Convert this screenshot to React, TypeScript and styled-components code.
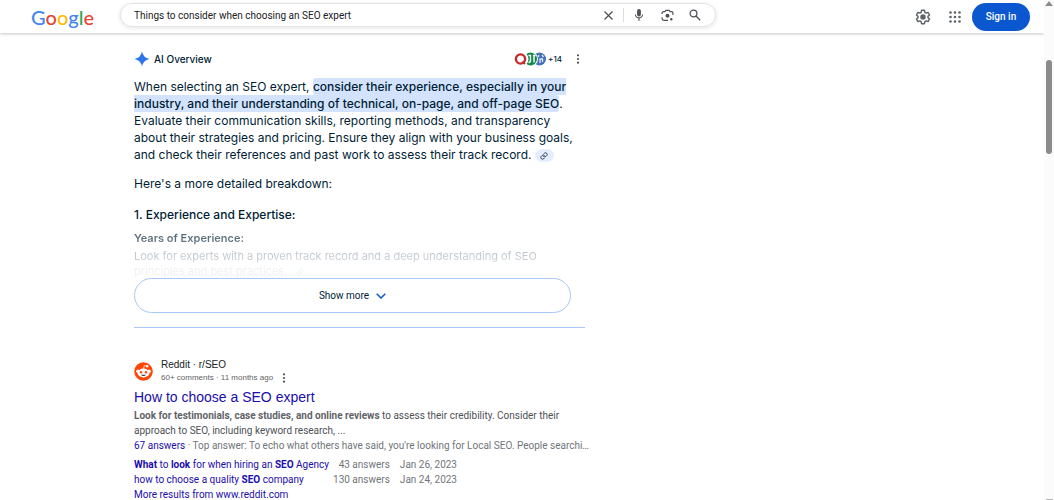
import React from "react";
import styled, { createGlobalStyle } from "styled-components";

const arial = `"Liberation Sans", Arial, sans-serif`;
const product = `Inter, "Google Sans", sans-serif`;

const GlobalStyle = createGlobalStyle`
  *, *::before, *::after { box-sizing: border-box; }
  html, body { margin: 0; background: #fff; overflow: hidden; }
  body { font-family: ${arial}; color: #001d35; }
  button, input { font: inherit; }
  h1, h2, h3, h4, p { margin: 0; }
`;

const Shell = styled.div`
  display: flex;
  height: 100vh;
  overflow: hidden;
`;

const Page = styled.div`
  flex: 1;
  min-width: 0;
`;

const Scrollbar = styled.div`
  width: 10px;
  background: #fbfbfb;
  display: flex;
  flex-direction: column;
  align-items: center;
  padding-top: 1px;
`;

const ScrollTrack = styled.div`
  flex: 1;
  width: 6px;
  padding-top: 54px;
`;

const ScrollThumb = styled.div`
  height: 94px;
  border-radius: 3px;
  background: #8b8b8b;
`;

const ScrollEnd = styled.div`
  width: 7px;
  height: 1px;
  background: #b5b5b5;
`;

const Header = styled.header`
  display: flex;
  align-items: center;
  height: 33px;
  padding: 0 14px 0 31px;
  box-shadow: 0 1px 3px rgba(60, 64, 67, 0.3);
`;

const Logo = styled.a`
  flex: none;
  width: 89px;
  font-family: Lato, sans-serif;
  font-size: 20px;
  font-weight: 500;
  line-height: 28px;
  text-decoration: none;
`;

const LogoLetter = styled.span<{ $color: string }>`
  color: ${(p) => p.$color};
`;

const SearchForm = styled.form`
  display: flex;
  align-items: center;
  flex: 0 1 596px;
  min-width: 0;
  height: 24px;
  margin-bottom: 3px;
  padding: 0 12px 0 13px;
  border: 1px solid #e3e5e8;
  border-radius: 12px;
  background: #fff;
  box-shadow: 0 1px 4px rgba(60, 64, 67, 0.14);
`;

const SearchInput = styled.input`
  flex: 1;
  min-width: 0;
  padding: 0;
  border: 0;
  outline: 0;
  background: transparent;
  font-family: Roboto, sans-serif;
  font-size: 10px;
  color: #202124;
`;

const IconButton = styled.button<{ $size?: number }>`
  display: flex;
  align-items: center;
  justify-content: center;
  flex: none;
  width: ${(p) => p.$size ?? 16}px;
  height: ${(p) => p.$size ?? 16}px;
  padding: 0;
  border: 0;
  background: none;
  color: #4d5156;
`;

const SearchTools = styled.div`
  display: flex;
  align-items: center;
  gap: 12px;
  height: 14px;
  margin-left: 7px;
  padding-left: 7px;
  border-left: 1px solid #dadce0;
`;

const HeaderActions = styled.div`
  display: flex;
  align-items: center;
  gap: 16px;
  margin-left: auto;
`;

const SignIn = styled.button`
  width: 58px;
  height: 28px;
  margin-left: -7px;
  padding: 0;
  border: 0;
  border-radius: 14px;
  background: #0b57d0;
  color: #fff;
  font-family: Roboto, sans-serif;
  font-size: 10px;
  font-weight: 500;
`;

const Main = styled.main`
  max-width: 585px;
  padding: 18px 0 0 134px;
`;

const OverviewHeader = styled.div`
  display: flex;
  align-items: center;
  height: 16px;
  gap: 4px;
`;

const OverviewTitle = styled.h2`
  font-family: ${product};
  font-size: 10px;
  font-weight: 500;
`;

const Sources = styled.button`
  display: flex;
  align-items: center;
  gap: 1px;
  margin: 0 5px 0 auto;
  padding: 0;
  border: 0;
  background: none;
  font-family: ${product};
  font-size: 8px;
  font-weight: 500;
  color: #001d35;
`;

const Summary = styled.section`
  font-family: ${product};
  font-size: 12px;
  line-height: 17px;
  white-space: nowrap;
`;

const Paragraph = styled.p`
  margin-top: 12px;
  &:first-child { margin-top: 11px; }
`;

const Highlight = styled.mark`
  padding: 1px 0;
  border-radius: 3px;
  background: #d3e3fd;
  color: inherit;
  font-weight: 500;
`;

const CiteChip = styled.button`
  display: inline-flex;
  align-items: center;
  justify-content: center;
  width: 19px;
  height: 13px;
  padding: 0;
  border: 0;
  border-radius: 7px;
  background: #e5edff;
  color: #001d35;
  vertical-align: middle;
`;

const Topic = styled.h3`
  margin-top: 14px;
  font-size: 12px;
  font-weight: 500;
`;

const Faded = styled.div`
  margin-top: 8px;
  font-size: 11px;
  line-height: 15px;
  mask-image: linear-gradient(#000a, #0009 14px, #0004 20px, #0003 32px, #0001 36px, #0001 46px);
`;

const FadedTitle = styled.h4`
  margin-bottom: 3px;
  font-size: 11px;
  font-weight: 600;
`;

const ShowMore = styled.button`
  display: flex;
  align-items: center;
  justify-content: center;
  gap: 7px;
  width: calc(100% - 14px);
  height: 35px;
  margin-top: -1px;
  padding: 0;
  border: 1px solid #a8c7fa;
  border-radius: 18px;
  background: #fff;
  font-family: Roboto, sans-serif;
  font-size: 10px;
  color: #001d35;
`;

const Divider = styled.hr`
  height: 1px;
  margin: 14px 0 30px;
  border: 0;
  background: #a8c7fa;
`;

const Result = styled.article`
  font-family: Roboto, Arial, sans-serif;
  font-size: 10px;
  line-height: 15px;
  color: #4d5156;
  white-space: nowrap;
`;

const Site = styled.div`
  display: flex;
  align-items: center;
  gap: 8px;
`;

const SiteName = styled.div`
  font-family: ${arial};
  font-size: 10px;
  line-height: 13px;
  color: #202124;
`;

const SiteMeta = styled.div`
  display: flex;
  align-items: center;
  gap: 6px;
  font-family: ${arial};
  font-size: 8px;
  line-height: 14px;
  color: #5f6368;
`;

const ResultTitle = styled.h3`
  margin: 3px 0 2px;
  font-family: ${arial};
  font-size: 14px;
  line-height: 18px;
  font-weight: 400;
`;

const Link = styled.a`
  color: #1a0dab;
  text-decoration: none;
`;

const Strong = styled.strong`
  color: #5f6368;
`;

const TopAnswer = styled.p`
  color: #70757a;
`;

const Answers = styled.table`
  margin-top: 4px;
  border-collapse: collapse;
  color: #70757a;
  td { padding: 0 10px 0 0; }
  td:first-child { padding-right: 4px; }
  td:nth-child(2) { text-align: right; }
`;

const Dots = () => (
  <svg width="4" height="10" viewBox="0 0 4 10" fill="currentColor" aria-hidden="true">
    <circle cx="2" cy="1.3" r="1.1" />
    <circle cx="2" cy="5" r="1.1" />
    <circle cx="2" cy="8.7" r="1.1" />
  </svg>
);

const ChainIcon = () => (
  <svg width="8" height="8" viewBox="0 0 24 24" fill="none" stroke="currentColor" strokeWidth="2.4" strokeLinecap="round" aria-hidden="true">
    <path d="M10 13a5 5 0 0 0 7.5.5l3-3a5 5 0 0 0-7-7l-1.700 1.700M14 11a5 5 0 0 0-7.500-.5l-3 3a5 5 0 0 0 7 7l1.700-1.700" />
  </svg>
);

const SourceIcons = () => (
  <svg width="33" height="16" viewBox="0 0 33 16" aria-hidden="true">
    <circle cx="25.500" cy="8" r="6.500" fill="#4872b8" />
    <path d="M24.500 4v2M26 12V8h2.500v3M28 4l1.500 2" stroke="#dce8fb" strokeWidth="1.300" fill="none" />
    <circle cx="16.500" cy="8" r="7.500" fill="#fff" />
    <circle cx="16.500" cy="8" r="6.500" fill="#128a4c" />
    <path d="M14.500 4.500h2v5q0 2-2 2M19 4.500h2.500M20 4.500v7" stroke="#fff" strokeWidth="1.400" fill="none" />
    <circle cx="7" cy="8" r="7.500" fill="#fff" />
    <circle cx="6.500" cy="8" r="4.600" fill="none" stroke="#c22b2b" strokeWidth="2.400" />
    <path d="M8.500 10.500l2.500 2.500" stroke="#c22b2b" strokeWidth="2" />
  </svg>
);

const RedditIcon = () => (
  <svg width="19" height="19" viewBox="0 0 19 19" aria-hidden="true">
    <circle cx="9.500" cy="9.500" r="9.300" fill="#ff4500" />
    <circle cx="3.800" cy="9.200" r="1.600" fill="#fff" />
    <circle cx="15.200" cy="9.200" r="1.600" fill="#fff" />
    <ellipse cx="9.500" cy="11" rx="6" ry="4.400" fill="#fff" />
    <path d="M9.500 7l.8-3.500 2.700.7" stroke="#fff" strokeWidth=".8" fill="none" />
    <circle cx="13.200" cy="4.200" r="1.200" fill="#fff" />
    <circle cx="7" cy="10.200" r="1.200" fill="#ff4500" />
    <circle cx="12" cy="10.200" r="1.200" fill="#ff4500" />
    <path d="M6.800 12.700h5.400q-2.700 2.500-5.400 0z" fill="#333" />
  </svg>
);

const letters: [string, string][] = [
  ["G", "#4285f4"],
  ["o", "#ea4335"],
  ["o", "#fbbc05"],
  ["g", "#4285f4"],
  ["l", "#34a853"],
  ["e", "#ea4335"],
];

export default function App() {
  return (
    <>
      <GlobalStyle />
      <Shell>
        <Page>
          <Header>
            <Logo href="#home" aria-label="Google">
              {letters.map(([ch, color], i) => (
                <LogoLetter key={i} $color={color}>{ch}</LogoLetter>
              ))}
            </Logo>
            <SearchForm role="search" onSubmit={(e) => e.preventDefault()}>
              <SearchInput aria-label="Search" defaultValue="Things to consider when choosing an SEO expert" />
              <IconButton type="button" aria-label="Clear">
                <svg width="9" height="9" viewBox="0 0 9 9" stroke="currentColor" strokeWidth="1.200">
                  <path d="M.5.5l8 8M8.500.5l-8 8" />
                </svg>
              </IconButton>
              <SearchTools>
                <IconButton type="button" aria-label="Search by voice">
                  <svg width="14" height="14" viewBox="0 0 24 24" fill="currentColor">
                    <path d="M12 14.500c1.900 0 3.300-1.500 3.300-3.300V5c0-1.900-1.500-3.300-3.300-3.300S8.700 3.100 8.700 5v6.200c0 1.800 1.400 3.300 3.300 3.300zM17.300 11c0 3-2.500 5-5.300 5s-5.300-2-5.300-5H5c0 3.400 2.700 6.200 6 6.700V22h2v-4.300c3.300-.5 6-3.300 6-6.700z" />
                  </svg>
                </IconButton>
                <IconButton type="button" aria-label="Search by image">
                  <svg width="13" height="13" viewBox="0 0 24 24" fill="none" stroke="currentColor" strokeWidth="2.200">
                    <path d="M2 9V7.500Q2 5 4.500 5H7l2-2.500h6L17 5h2.500Q22 5 22 7.500V11M2 15v2.500Q2 21 5.500 21H13" />
                    <circle cx="12" cy="12.500" r="3.700" fill="currentColor" stroke="none" />
                    <circle cx="19" cy="19" r="2.200" fill="currentColor" stroke="none" />
                  </svg>
                </IconButton>
                <IconButton type="submit" aria-label="Search">
                  <svg width="12" height="12" viewBox="0 0 12 12" fill="none" stroke="currentColor" strokeWidth="1.300">
                    <circle cx="4.500" cy="4.500" r="3.400" />
                    <path d="M7 7l4.200 4.200" />
                  </svg>
                </IconButton>
              </SearchTools>
            </SearchForm>
            <HeaderActions>
              <IconButton type="button" aria-label="Settings">
                <svg width="16" height="16" viewBox="0 0 24 24" fill="none" stroke="#5f6368" strokeWidth="2.200">
                  <path strokeLinejoin="round" d="M9.800 2h4.400l.6 3.200 1.800 1 3-1 2.200 3.800-2.300 2v2l2.300 2-2.200 3.800-3-1-1.800 1-.6 3.200H9.800l-.6-3.200-1.800-1-3 1-2.200-3.800 2.300-2v-2l-2.300-2 2.200-3.800 3 1 1.800-1z" />
                  <circle cx="12" cy="12" r="3" fill="#5f6368" />
                </svg>
              </IconButton>
              <IconButton type="button" aria-label="Google apps">
                <svg width="12" height="12" viewBox="0 0 12 12" fill="#5f6368">
                  {[1.5, 6, 10.5].map((y) =>
                    [1.5, 6, 10.5].map((x) => <circle key={`${x}-${y}`} cx={x} cy={y} r="1.300" />)
                  )}
                </svg>
              </IconButton>
              <SignIn type="button">Sign in</SignIn>
            </HeaderActions>
          </Header>
          <Main>
            <OverviewHeader>
              <svg width="16" height="16" viewBox="0 0 16 16" aria-hidden="true">
                <path d="M8 .5Q9.200 6.800 15.500 8 9.200 9.200 8 15.500 6.800 9.200.5 8 6.800 6.800 8 .5z" fill="#2f74e8" />
              </svg>
              <OverviewTitle>AI Overview</OverviewTitle>
              <Sources type="button">
                <SourceIcons />
                +14
              </Sources>
              <IconButton type="button" $size={14} aria-label="More options"><Dots /></IconButton>
            </OverviewHeader>
            <Summary>
              <Paragraph>
                When selecting an SEO expert, <Highlight>consider their experience, especially in your<br />
                industry, and their understanding of technical, on-page, and off-page SEO</Highlight>.<br />
                Evaluate their communication skills, reporting methods, and transparency<br />
                about their strategies and pricing. Ensure they align with your business goals,<br />
                and check their references and past work to assess their track record.{" "}
                <CiteChip type="button" aria-label="Sources"><ChainIcon /></CiteChip>
              </Paragraph>
              <Paragraph>Here's a more detailed breakdown:</Paragraph>
              <Topic>1. Experience and Expertise:</Topic>
              <Faded>
                <FadedTitle>Years of Experience:</FadedTitle>
                <p>
                  Look for experts with a proven track record and a deep understanding of SEO<br />
                  principles and best practices.{" "}
                  <CiteChip type="button" aria-label="Sources"><ChainIcon /></CiteChip>
                </p>
              </Faded>
            </Summary>
            <ShowMore type="button">
              Show more
              <svg width="10" height="6" viewBox="0 0 10 6" fill="none" stroke="#0b57d0" strokeWidth="1.500" aria-hidden="true">
                <path d="M.7.7L5 5 9.300.7" />
              </svg>
            </ShowMore>
            <Divider />
            <Result>
              <Site>
                <RedditIcon />
                <div>
                  <SiteName>Reddit · r/SEO</SiteName>
                  <SiteMeta>
                    60+ comments · 11 months ago
                    <IconButton type="button" $size={10} aria-label="About this result"><Dots /></IconButton>
                  </SiteMeta>
                </div>
              </Site>
              <ResultTitle><Link href="#result">How to choose a SEO expert</Link></ResultTitle>
              <p>
                <Strong>Look for testimonials, case studies, and online reviews</Strong> to assess their credibility. Consider their<br />
                approach to SEO, including keyword research, ...
              </p>
              <TopAnswer>
                <Link href="#answers">67 answers</Link> · Top answer: To echo what others have said, you're looking for Local SEO. People searchi…
              </TopAnswer>
              <Answers>
                <tbody>
                  <tr>
                    <td><Link href="#agency"><b>What</b> to <b>look</b> for when hiring an <b>SEO</b> Agency</Link></td>
                    <td>43 answers</td>
                    <td>Jan 26, 2023</td>
                  </tr>
                  <tr>
                    <td><Link href="#company">how to choose a quality <b>SEO</b> company</Link></td>
                    <td>130 answers</td>
                    <td>Jan 24, 2023</td>
                  </tr>
                </tbody>
              </Answers>
              <Link href="#more">More results from www.reddit.com</Link>
            </Result>
          </Main>
        </Page>
        <Scrollbar aria-hidden="true">
          <svg width="8" height="5" viewBox="0 0 8 5"><path d="M4 0l4 5H0z" fill="#8b8b8b" /></svg>
          <ScrollTrack><ScrollThumb /></ScrollTrack>
          <ScrollEnd />
        </Scrollbar>
      </Shell>
    </>
  );
}
